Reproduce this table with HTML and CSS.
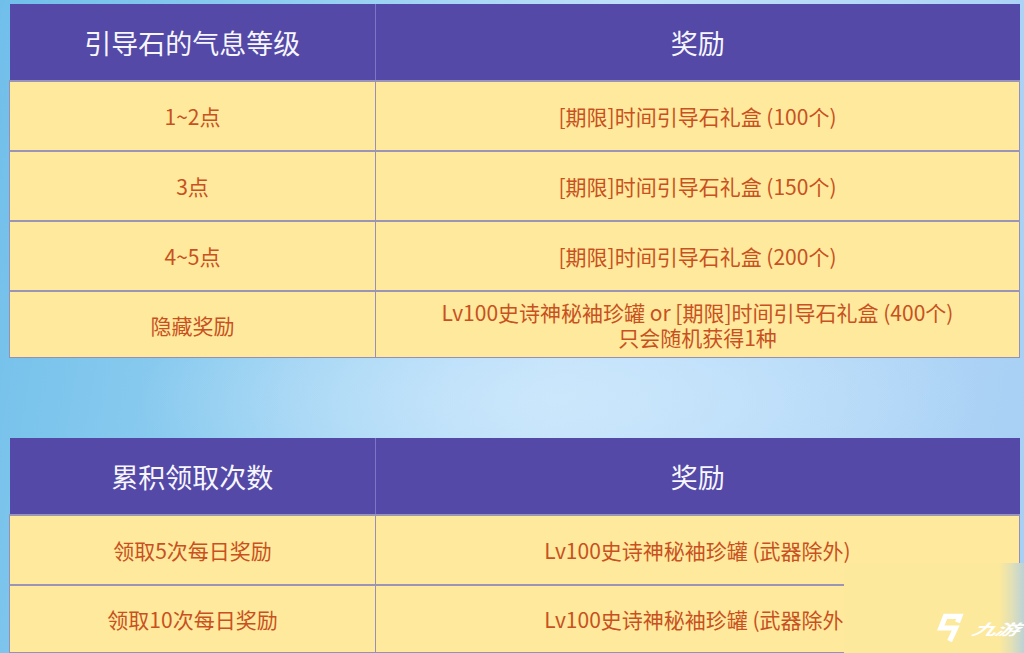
FILE: index.html
```html
<!DOCTYPE html>
<html lang="zh-CN">
<head>
<meta charset="utf-8">
<title>引导石的气息等级奖励</title>
<link rel="stylesheet" href="styles.css">
</head>
<body>
<div class="page">
  <table class="reward first">
    <colgroup><col class="c1"><col class="c2"></colgroup>
    <thead>
      <tr><th>引导石的气息等级</th><th>奖励</th></tr>
    </thead>
    <tbody>
      <tr><td>1~2点</td><td>[期限]时间引导石礼盒 (100个)</td></tr>
      <tr><td>3点</td><td>[期限]时间引导石礼盒 (150个)</td></tr>
      <tr><td>4~5点</td><td>[期限]时间引导石礼盒 (200个)</td></tr>
      <tr class="short"><td>隐藏奖励</td><td><div class="two-line">Lv100史诗神秘袖珍罐 or [期限]时间引导石礼盒 (400个)<br>只会随机获得1种</div></td></tr>
    </tbody>
  </table>

  <table class="reward second">
    <colgroup><col class="c1"><col class="c2"></colgroup>
    <thead>
      <tr><th>累积领取次数</th><th>奖励</th></tr>
    </thead>
    <tbody>
      <tr><td>领取5次每日奖励</td><td>Lv100史诗神秘袖珍罐 (武器除外)</td></tr>
      <tr class="last"><td>领取10次每日奖励</td><td>Lv100史诗神秘袖珍罐 (武器除外)</td></tr>
    </tbody>
  </table>
</div>

<div class="watermark">
  <svg class="wm-logo" viewBox="0 0 30 32" width="28" height="30">
    <polyline points="22,10 24.5,3.5 9,3.5 4,16 20,16 13.5,30" fill="none" stroke="#ffffff" stroke-width="5.5" stroke-linejoin="miter" stroke-miterlimit="6"/>
  </svg>
  <span class="wm-text">九游</span>
</div>
</body>
</html>
```
FILE: styles.css
```css
html, body {
  margin: 0;
  padding: 0;
}

body {
  width: 1024px;
  height: 653px;
  overflow: hidden;
  position: relative;
  font-family: "Noto Sans CJK SC", "Noto Sans", sans-serif;
  background-color: #9fd0f2;
  background-image:
    radial-gradient(ellipse 420px 140px at 560px 400px, rgba(205, 232, 252, 0.85), rgba(205, 232, 252, 0) 100%),
    linear-gradient(100deg, #70bfea 0%, #8fcdf0 25%, #bfe0fa 55%, #b2d7f7 80%, #a6cff4 100%);
}

.page {
  padding: 4px 0 0 9px;
  display: flex;
  flex-direction: column;
  gap: 80px;
}

.reward {
  width: 1011px;
  border-collapse: collapse;
  table-layout: fixed;
}

.c1 { width: 366px; }

.reward th {
  background: #5449a6;
  color: #f6f6ff;
  font-size: 27px;
  font-weight: 400;
  height: 76px;
  padding: 0;
  border-left: 1px solid #7d75c6;
  border-right: 1px solid #7d75c6;
}

.reward th:first-child { border-left: none; }
.reward th:last-child { border-right: none; }

.reward td {
  background: #fee99c;
  color: #c8511f;
  font-size: 21px;
  line-height: 26px;
  text-align: center;
  padding: 0;
  height: 68px;
  border: 1px solid #9690b6;
  border-top: 2px solid #9a94b6;
}

.two-line {
  line-height: 25px;
}

.reward tr.short td { height: 65px; }
.reward tr.last td { height: 66px; }

.watermark {
  position: absolute;
  left: 844px;
  top: 563px;
  width: 180px;
  height: 90px;
  background-color: #fde99b;
  background-image: linear-gradient(to right, rgba(253, 233, 155, 0) 0%, rgba(253, 233, 155, 0) 86%, #e2e0b6 93%, #bcd2d6 100%);
  display: flex;
  align-items: flex-end;
  justify-content: flex-end;
  gap: 5px;
  padding: 0 8px 10px 0;
  box-sizing: border-box;
}

.wm-logo {
  display: block;
}

.wm-text {
  display: block;
  color: #ffffff;
  font-size: 24px;
  line-height: 26px;
  font-weight: 700;
  font-style: italic;
  transform: scaleY(0.62) skewX(-14deg);
  transform-origin: bottom center;
  margin-bottom: 6px;
  letter-spacing: -1px;
}
```
